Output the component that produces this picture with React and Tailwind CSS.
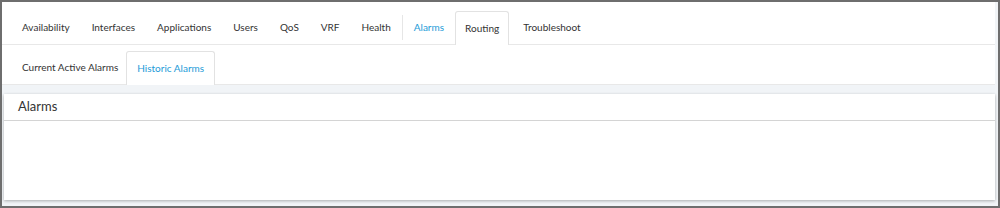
import React from "react";

const top = ["Availability", "Interfaces", "Applications", "Users", "QoS", "VRF", "Health"];

export default function App() {
  return (
    <div className="w-[1000px] h-[208px] border-2 border-[#6e6e6e] bg-[#f1f4f7] overflow-hidden font-['Lato','Liberation_Sans',sans-serif] text-[#333]">
      <div className="mr-[3px] bg-white">
        <div className="h-[43px] border-b border-[#e8e8e8] flex items-end pl-[9px] text-[10px]">
          {top.map((t) => (
            <div key={t} className="h-[34px] px-[11px] flex items-center">
              {t}
            </div>
          ))}
          <div className="self-center mt-[8px] w-px h-[25px] bg-[#e6e6e6]" />
          <div className="h-[34px] px-[11px] flex items-center text-[#239bd8]">Alarms</div>
          <div className="h-[34px] px-[9px] flex items-center border border-b-0 border-[#e2e2e2] rounded-t-[3px] bg-white -mb-px pb-px">Routing</div>
          <div className="h-[34px] px-[14px] flex items-center">Troubleshoot</div>
        </div>
        <div className="h-[40px] border-b border-[#e8e8e8] flex items-end pl-[9px] text-[10px]">
          <div className="h-[34px] pl-[11px] pr-[8px] flex items-center">Current Active Alarms</div>
          <div className="h-[34px] px-[10px] flex items-center border border-b-0 border-[#e2e2e2] rounded-t-[3px] bg-white -mb-px pb-px text-[#239bd8]">Historic Alarms</div>
        </div>
      </div>
      <div className="pt-[9px] pl-[2px] pr-[3px]">
        <div className="bg-white h-[106px] shadow-[0_1px_3px_rgba(0,0,0,0.3)]">
          <div className="h-[27px] border-b border-[#d4d4d4] flex items-center pl-[14px] text-[13px] text-[#333]">Alarms</div>
        </div>
      </div>
    </div>
  );
}
